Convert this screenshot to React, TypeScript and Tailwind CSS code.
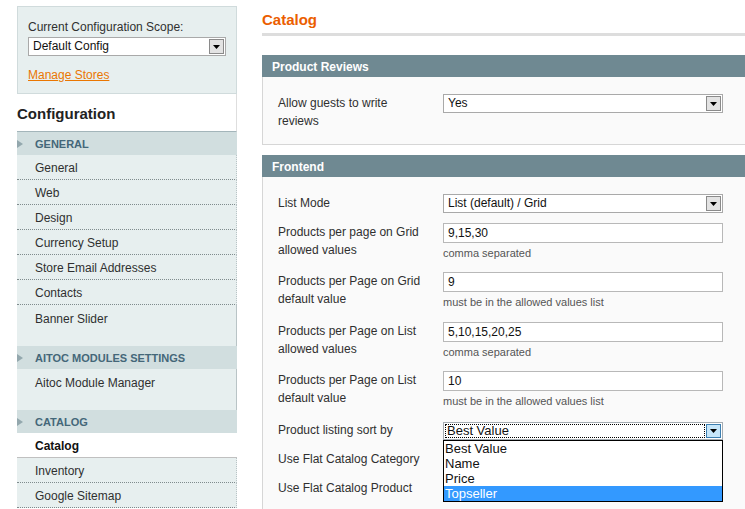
import React from "react";

function Arrow() {
  return (
    <svg width="7" height="4" viewBox="0 0 7 4">
      <path d="M0 0h7L3.5 4z" fill="#000" />
    </svg>
  );
}

function Select({ value, h = "h-[19px]" }: { value: string; h?: string }) {
  return (
    <div className={`flex ${h} items-stretch border border-[#a9a9a9] bg-white`}>
      <span className="flex-1 pl-[4px] text-[12px] leading-[17px] text-[#111]">{value}</span>
      <div className="m-px flex w-[15px] items-center justify-center border border-[#8a8a8a] bg-[#e3e3e3]">
        <Arrow />
      </div>
    </div>
  );
}

function SideHeader({ title }: { title: string }) {
  return (
    <div className="flex h-[23px] items-center bg-[#d1dedf] pt-px">
      <svg width="6" height="8" viewBox="0 0 6 8" className="shrink-0">
        <path d="M0 0L6 4L0 8z" fill="#93a7ad" />
      </svg>
      <span className="ml-[12px] text-[11px] font-bold text-[#446779]">{title}</span>
    </div>
  );
}

function SideItem({ label, last }: { label: string; last?: boolean }) {
  return (
    <div
      className={`flex h-[25px] items-center border-r border-[#b9c4c6] bg-[#e7efef] pl-[18px] pt-[2px] text-[12px] text-[#2f2f2f] ${
        last ? "" : "border-b border-b-[#7f8b8d] border-dotted"
      }`}
    >
      {label}
    </div>
  );
}

function Spacer() {
  return <div className="h-[16px] border-r border-[#b9c4c6] bg-[#e7efef]" />;
}

function Label({ children, className = "" }: { children: React.ReactNode; className?: string }) {
  return <div className={`w-[165px] shrink-0 pr-[10px] text-[12px] leading-[18px] text-[#2f2f2f] ${className}`}>{children}</div>;
}

function InputRow({ label, value, hint, h }: { label: React.ReactNode; value: string; hint: string; h: string }) {
  return (
    <div className={`flex ${h}`}>
      <Label>{label}</Label>
      <div className="w-[280px]">
        <div className="h-[20px] border border-[#b8b8b8] bg-white pl-[4px] text-[12px] leading-[18px] text-[#111]">{value}</div>
        <div className="mt-[3px] text-[11px] leading-[14px] text-[#555]">{hint}</div>
      </div>
    </div>
  );
}

export default function App() {
  return (
    <div className="flex h-[509px] w-[745px] overflow-hidden bg-white font-['Liberation_Sans',Arial,sans-serif]">
      {/* Sidebar */}
      <div className="ml-[17px] w-[220px] shrink-0 pt-[6px]">
        <div className="h-[88px] border border-[#d0dbdc] bg-[#e7efef] px-[10px] pt-[13px]">
          <div className="text-[12px] leading-[15px] text-[#2f2f2f]">Current Configuration Scope:</div>
          <div className="mt-[2px]">
            <Select value="Default Config" />
          </div>
          <div className="mt-[12px] text-[12px] leading-[15px] text-[#ea7601] underline">Manage Stores</div>
        </div>
        <div className="flex h-[38px] items-center border-b border-r border-b-[#a3b5ba] border-r-[#dedede] bg-white pt-[4px] text-[15px] font-bold text-[#222]">
          Configuration
        </div>
        <SideHeader title="GENERAL" />
        <SideItem label="General" />
        <SideItem label="Web" />
        <SideItem label="Design" />
        <SideItem label="Currency Setup" />
        <SideItem label="Store Email Addresses" />
        <SideItem label="Contacts" />
        <SideItem label="Banner Slider" last />
        <Spacer />
        <SideHeader title="AITOC MODULES SETTINGS" />
        <SideItem label="Aitoc Module Manager" last />
        <Spacer />
        <SideHeader title="CATALOG" />
        <div className="flex h-[25px] items-center border-b border-[#c0c0c0] bg-white pl-[18px] pt-[2px] text-[12px] font-bold text-[#111]">
          Catalog
        </div>
        <SideItem label="Inventory" />
        <SideItem label="Google Sitemap" />
      </div>

      {/* Main */}
      <div className="ml-[25px] w-[495px] shrink-0 pt-[10px]">
        <h3 className="text-[15px] font-bold leading-[20px] text-[#eb5e00]">Catalog</h3>
        <div className="mt-[3px] h-[3px] bg-[#dddddd]" />

        <div className="mt-[19px]">
          <div className="h-[22px] bg-[#6f8992] pl-[10px] pt-px text-[12px] font-bold leading-[22px] text-white">Product Reviews</div>
          <div className="border-x border-b border-[#d6d6d6] bg-[#fafafa] pb-[14px] pl-[15px] pt-[17px]">
            <div className="flex">
              <Label>
                Allow guests to write
                <br />
                reviews
              </Label>
              <div className="w-[280px]">
                <Select value="Yes" />
              </div>
            </div>
          </div>
        </div>

        <div className="mt-[10px]">
          <div className="h-[22px] bg-[#6f8992] pl-[10px] pt-px text-[12px] font-bold leading-[22px] text-white">Frontend</div>
          <div className="h-[400px] border-x border-[#d6d6d6] bg-[#fafafa] pl-[15px] pt-[17px]">
            <div className="flex h-[29px]">
              <Label>List Mode</Label>
              <div className="w-[280px]">
                <Select value="List (default) / Grid" />
              </div>
            </div>
            <InputRow
              h="h-[49px]"
              label={<>Products per page on Grid<br />allowed values</>}
              value="9,15,30"
              hint="comma separated"
            />
            <InputRow
              h="h-[50px]"
              label={<>Products per Page on Grid<br />default value</>}
              value="9"
              hint="must be in the allowed values list"
            />
            <InputRow
              h="h-[49px]"
              label={<>Products per Page on List<br />allowed values</>}
              value="5,10,15,20,25"
              hint="comma separated"
            />
            <InputRow
              h="h-[51px]"
              label={<>Products per Page on List<br />default value</>}
              value="10"
              hint="must be in the allowed values list"
            />
            <div className="flex h-[28px] items-start">
              <Label className="-mt-[1px]">Product listing sort by</Label>
              <div className="relative z-10 w-[280px]">
                <div className="flex h-[18px] items-stretch border border-[#a5acb2] bg-white">
                  <span className="m-px flex-1 border border-dotted border-black pl-px text-[13px] leading-[12px] text-[#111]">
                    Best Value
                  </span>
                  <div className="my-px mr-px flex w-[15px] items-center justify-center border border-[#3c7fb1] bg-[#c6e6fa]">
                    <Arrow />
                  </div>
                </div>
                <div className="absolute left-0 top-full w-[280px] border border-black bg-white text-[13px] leading-[15px] text-[#111]">
                  <div className="pl-px">Best Value</div>
                  <div className="pl-px">Name</div>
                  <div className="pl-px">Price</div>
                  <div className="bg-[#3399ff] pl-px text-white">Topseller</div>
                </div>
              </div>
            </div>
            <div className="flex h-[29px]">
              <Label>Use Flat Catalog Category</Label>
            </div>
            <div className="flex h-[29px]">
              <Label>Use Flat Catalog Product</Label>
            </div>
          </div>
        </div>
      </div>
    </div>
  );
}
